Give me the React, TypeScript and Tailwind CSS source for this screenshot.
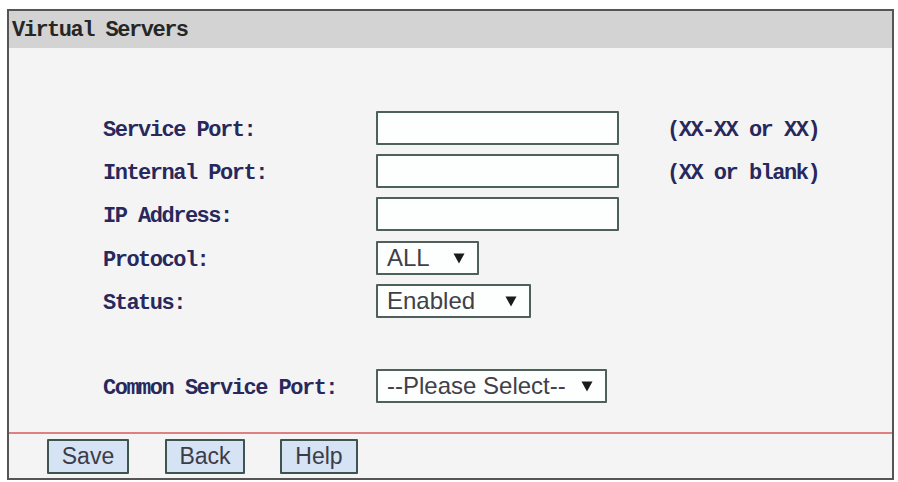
import React from 'react'

const mono = { fontFamily: '"Liberation Mono", "Courier New", monospace' }
const sans = { fontFamily: '"Liberation Sans", Arial, sans-serif' }

function Arrow() {
  return (
    <svg width="12" height="11" viewBox="0 0 12 11" className="shrink-0">
      <path d="M0.5 0.5 H11.5 L6 10.5 Z" fill="#1a1a1a" />
    </svg>
  )
}

function Label({ children }: { children: React.ReactNode }) {
  return (
    <div
      style={mono}
      className="w-[273px] shrink-0 pt-[6px] text-[22px] font-bold tracking-[-1.5px] leading-none text-[#28285c]"
    >
      {children}
    </div>
  )
}

function Hint({ children }: { children: React.ReactNode }) {
  return (
    <span
      style={mono}
      className="ml-[48px] pt-[6px] text-[22px] font-bold tracking-[-1.5px] leading-none text-[#28285c]"
    >
      {children}
    </span>
  )
}

function TextBox() {
  return (
    <div className="h-[34px] w-[243px] shrink-0 rounded-[1px] border-2 border-[#4d605a] bg-[#fdfefe]" />
  )
}

function Select({ value, width }: { value: string; width: string }) {
  return (
    <div
      style={sans}
      className={`flex h-[34px] shrink-0 items-center justify-between rounded-[1px] border-2 border-[#4d605a] bg-[#fdfefe] pl-[9px] pr-[12px] text-[24px] leading-none text-[#414049] ${width}`}
    >
      <span>{value}</span>
      <Arrow />
    </div>
  )
}

function Btn({ children, width }: { children: React.ReactNode; width: string }) {
  return (
    <div
      style={sans}
      className={`flex h-[35px] items-center justify-center rounded-[1px] border-2 border-[#3e5450] bg-[#d5e3f4] text-[23px] leading-none text-[#3c3c48] ${width}`}
    >
      {children}
    </div>
  )
}

export default function App() {
  return (
    <div className="h-[482px] w-[898px] bg-white pl-[7px] pt-[9px]">
      <div className="flex h-[471px] w-[887px] flex-col border-2 border-[#555555] bg-[#f4f4f4]">
        {/* Title bar */}
        <div className="flex h-[37px] shrink-0 items-start bg-[#d3d3d3] pl-[3px] pt-[9px]">
          <span
            style={mono}
            className="text-[22px] font-bold tracking-[-1.5px] leading-none text-[#262626]"
          >
            Virtual Servers
          </span>
        </div>

        {/* Form */}
        <div className="flex flex-1 flex-col pl-[94px] pt-[63px]">
          <div className="flex items-center">
            <Label>Service Port:</Label>
            <TextBox />
            <Hint>(XX-XX or XX)</Hint>
          </div>
          <div className="mt-[9px] flex items-center">
            <Label>Internal Port:</Label>
            <TextBox />
            <Hint>(XX or blank)</Hint>
          </div>
          <div className="mt-[9px] flex items-center">
            <Label>IP Address:</Label>
            <TextBox />
          </div>
          <div className="mt-[10px] flex items-center">
            <Label>Protocol:</Label>
            <Select value="ALL" width="w-[103px]" />
          </div>
          <div className="mt-[9px] flex items-center">
            <Label>Status:</Label>
            <Select value="Enabled" width="w-[155px]" />
          </div>
          <div className="mt-[51px] flex items-center">
            <Label>Common Service Port:</Label>
            <Select value="--Please Select--" width="w-[231px]" />
          </div>
        </div>

        {/* Buttons */}
        <div className="flex h-[46px] shrink-0 items-start border-t-2 border-[#e07f80] pl-[38px] pt-[5px]">
          <Btn width="w-[82px]">Save</Btn>
          <div className="ml-[36px]">
            <Btn width="w-[80px]">Back</Btn>
          </div>
          <div className="ml-[35px]">
            <Btn width="w-[78px]">Help</Btn>
          </div>
        </div>
      </div>
    </div>
  )
}
